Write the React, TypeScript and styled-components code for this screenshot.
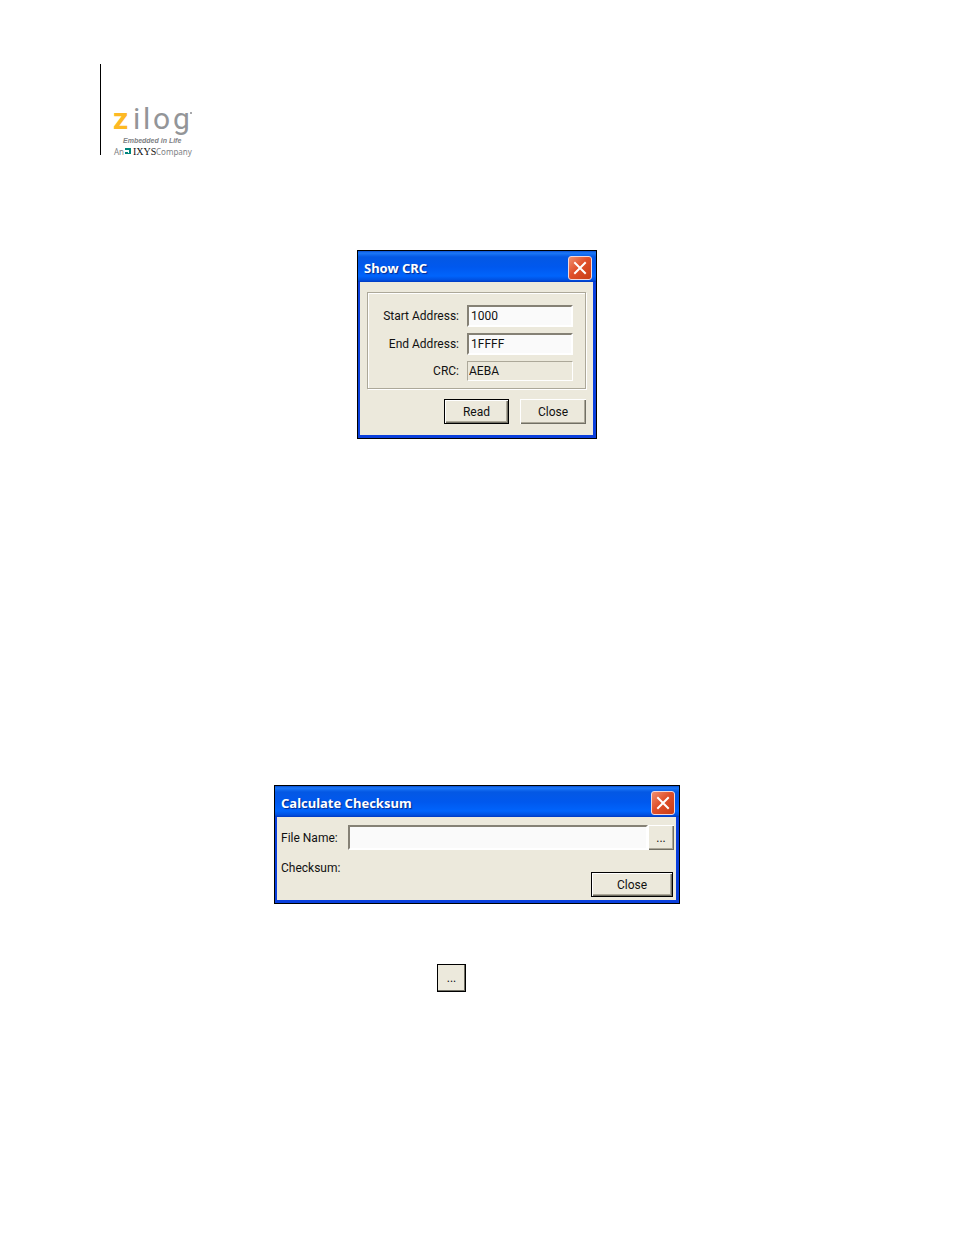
import React from "react";
import styled, { createGlobalStyle, css } from "styled-components";

const GlobalStyle = createGlobalStyle`
  body {
    margin: 0;
    background: #fff;
    font-family: Roboto, "Liberation Sans", sans-serif;
  }
  *, *::before, *::after {
    box-sizing: border-box;
  }
`;

const Page = styled.main`
  display: flex;
  flex-direction: column;
  padding: 64px 100px;
`;

const Masthead = styled.header`
  display: flex;
  align-items: flex-end;
  height: 91px;
  padding-left: 12px;
  border-left: 1px solid #000;
`;

const LogoMark = styled.svg`
  display: block;
  overflow: visible;
`;

const Figure = styled.section<{ $gap: number }>`
  display: flex;
  justify-content: center;
  margin-top: ${(p) => p.$gap}px;
`;

const Dialog = styled.div<{ $width: number }>`
  width: ${(p) => p.$width}px;
  max-width: 100%;
  border: 1px solid #000;
  background: #0a3fdc;
`;

const TitleBar = styled.div`
  display: flex;
  align-items: center;
  justify-content: space-between;
  height: 31px;
  padding: 2px 4px 0 6px;
  background: linear-gradient(
    #0a4fd0 0,
    #1c78f8 2px,
    #0458e4 6px,
    #0058ee 16px,
    #0064fc 25px,
    #0050e0 29px,
    #0038c0 31px
  );
`;

const Title = styled.h2`
  margin: 0;
  color: #fff;
  font: bold 13px/18px "Noto Sans", sans-serif;
  text-shadow: 1px 1px 1px #062a8c;
`;

const CloseBox = styled.button`
  display: flex;
  width: 24px;
  height: 24px;
  padding: 0;
  align-items: center;
  justify-content: center;
  border: 1px solid #f0d8dc;
  border-radius: 3px;
  background: linear-gradient(135deg, #f09070, #e0502c 45%, #c83c14);
`;

const Body = styled.div`
  display: flex;
  flex-direction: column;
  margin: 0 3px 3px 2px;
  background: #ece9dc;
`;

const CrcBody = styled(Body)`
  gap: 10px;
  padding: 10px 7px 11px;
`;

const Group = styled.fieldset`
  display: flex;
  flex-direction: column;
  gap: 6px;
  margin: 0;
  padding: 12px 12px 7px;
  border: 1px solid #aca899;
  box-shadow: 1px 1px 0 #fff, inset 1px 1px 0 #fff;
`;

const Field = styled.div`
  display: grid;
  grid-template-columns: 1fr 106px;
  column-gap: 8px;
  align-items: center;
`;

const label = css`
  color: #111;
  font-size: 12px;
  line-height: 20px;
`;

const FieldLabel = styled.label`
  ${label}
  text-align: right;
`;

const TextBox = styled.input`
  width: 100%;
  min-width: 0;
  height: 22px;
  padding: 0 2px;
  border: 2px solid;
  border-color: #858175 #fff #fff #858175;
  border-radius: 0;
  background: #fafafa;
  color: #111;
  font: 12px/18px Roboto, "Liberation Sans", sans-serif;

  &:read-only {
    height: 20px;
    padding: 0 1px;
    border-width: 1px;
    border-color: #aca899 #fff #fff #aca899;
    background: #ece9dc;
  }
`;

const ButtonRow = styled.div`
  display: flex;
  justify-content: flex-end;
  gap: 11px;
`;

const PushButton = styled.button<{ $width: number; $default?: boolean }>`
  width: ${(p) => p.$width}px;
  height: 25px;
  padding: 0;
  border: ${(p) => (p.$default ? "1px solid #000" : "0")};
  box-shadow: inset 1px 1px 0 #fff, inset -1px -1px 0 #716f64,
    inset -2px -2px 0 #aca899;
  background: #ece9dc;
  color: #111;
  font: 12px/20px Roboto, "Liberation Sans", sans-serif;
`;

const ChecksumBody = styled(Body)`
  padding: 8px 2px 3px 4px;
`;

const FileRow = styled.div`
  display: grid;
  grid-template-columns: 67px 1fr 26px;
  align-items: center;
`;

const FileLabel = styled.label`
  ${label}
`;

const FileBox = styled(TextBox)`
  height: 25px;
`;

const ResultRow = styled.div`
  display: flex;
  align-items: flex-end;
  justify-content: space-between;
  height: 47px;
  padding-right: 1px;
`;

const ResultLabel = styled.span`
  ${label}
  align-self: flex-start;
  margin-top: 8px;
`;

const Step = styled.div`
  display: flex;
  margin-top: 60px;
  padding-left: 337px;
`;

const BrowseButton = styled.button`
  width: 29px;
  height: 28px;
  padding: 0;
  border: 1px solid #000;
  box-shadow: inset -1px -1px 0 #716f64;
  background: #ece9dc;
  color: #111;
  font: 12px/20px Roboto, "Liberation Sans", sans-serif;
`;

function Logo() {
  return (
    <LogoMark width="82" height="54" viewBox="0 0 82 54" role="img" aria-label="Zilog, Embedded in Life">
      <g fontFamily="Roboto, sans-serif" fontSize="30" fill="#939598">
        <text x="0" y="28" fontWeight="bold" fill="#fdb924">z</text>
        <text x="20" y="28">i</text>
        <text x="30" y="28">l</text>
        <text x="40" y="28">o</text>
        <text x="60" y="28">g</text>
      </g>
      <circle cx="78" cy="12" r="1" fill="#8b8d90" />
      <text x="10" y="42" fontFamily="Liberation Sans, sans-serif" fontSize="7" fontWeight="bold" fontStyle="italic" fill="#808285">
        Embedded in Life
      </text>
      <text x="1" y="54" fontFamily="Noto Sans, sans-serif" fontSize="8" fill="#808285">An</text>
      <path d="M12 47h6v6h-6z" fill="#00857c" />
      <path d="M12 49h3v2h-3zM15 49h1v3h-1z" fill="#fff" />
      <text x="20" y="54" fontFamily="Liberation Serif, serif" fontSize="10" fill="#111">IXYS</text>
      <text x="43" y="54" fontFamily="Noto Sans, sans-serif" fontSize="8" fill="#808285">Company</text>
    </LogoMark>
  );
}

function DialogTitle({ children }: { children: string }) {
  return (
    <TitleBar>
      <Title>{children}</Title>
      <CloseBox type="button" aria-label="Close window">
        <svg width="14" height="14" viewBox="0 0 14 14">
          <path d="M2 2l10 10M12 2L2 12" stroke="#fff" strokeWidth="2" strokeLinecap="square" />
        </svg>
      </CloseBox>
    </TitleBar>
  );
}

export default function App() {
  return (
    <>
      <GlobalStyle />
      <Page>
        <Masthead>
          <Logo />
        </Masthead>

        <Figure $gap={95}>
          <Dialog $width={240}>
            <DialogTitle>Show CRC</DialogTitle>
            <CrcBody>
              <Group>
                <Field>
                  <FieldLabel htmlFor="start">Start Address:</FieldLabel>
                  <TextBox id="start" defaultValue="1000" />
                </Field>
                <Field>
                  <FieldLabel htmlFor="end">End Address:</FieldLabel>
                  <TextBox id="end" defaultValue="1FFFF" />
                </Field>
                <Field>
                  <FieldLabel htmlFor="crc">CRC:</FieldLabel>
                  <TextBox id="crc" value="AEBA" readOnly />
                </Field>
              </Group>
              <ButtonRow>
                <PushButton type="button" $width={65} $default>Read</PushButton>
                <PushButton type="button" $width={66}>Close</PushButton>
              </ButtonRow>
            </CrcBody>
          </Dialog>
        </Figure>

        <Figure $gap={346}>
          <Dialog $width={406}>
            <DialogTitle>Calculate Checksum</DialogTitle>
            <ChecksumBody>
              <FileRow>
                <FileLabel htmlFor="file">File Name:</FileLabel>
                <FileBox id="file" defaultValue="" />
                <PushButton type="button" $width={26}>...</PushButton>
              </FileRow>
              <ResultRow>
                <ResultLabel>Checksum:</ResultLabel>
                <PushButton type="button" $width={82} $default>Close</PushButton>
              </ResultRow>
            </ChecksumBody>
          </Dialog>
        </Figure>

        <Step>
          <BrowseButton type="button">...</BrowseButton>
        </Step>
      </Page>
    </>
  );
}
